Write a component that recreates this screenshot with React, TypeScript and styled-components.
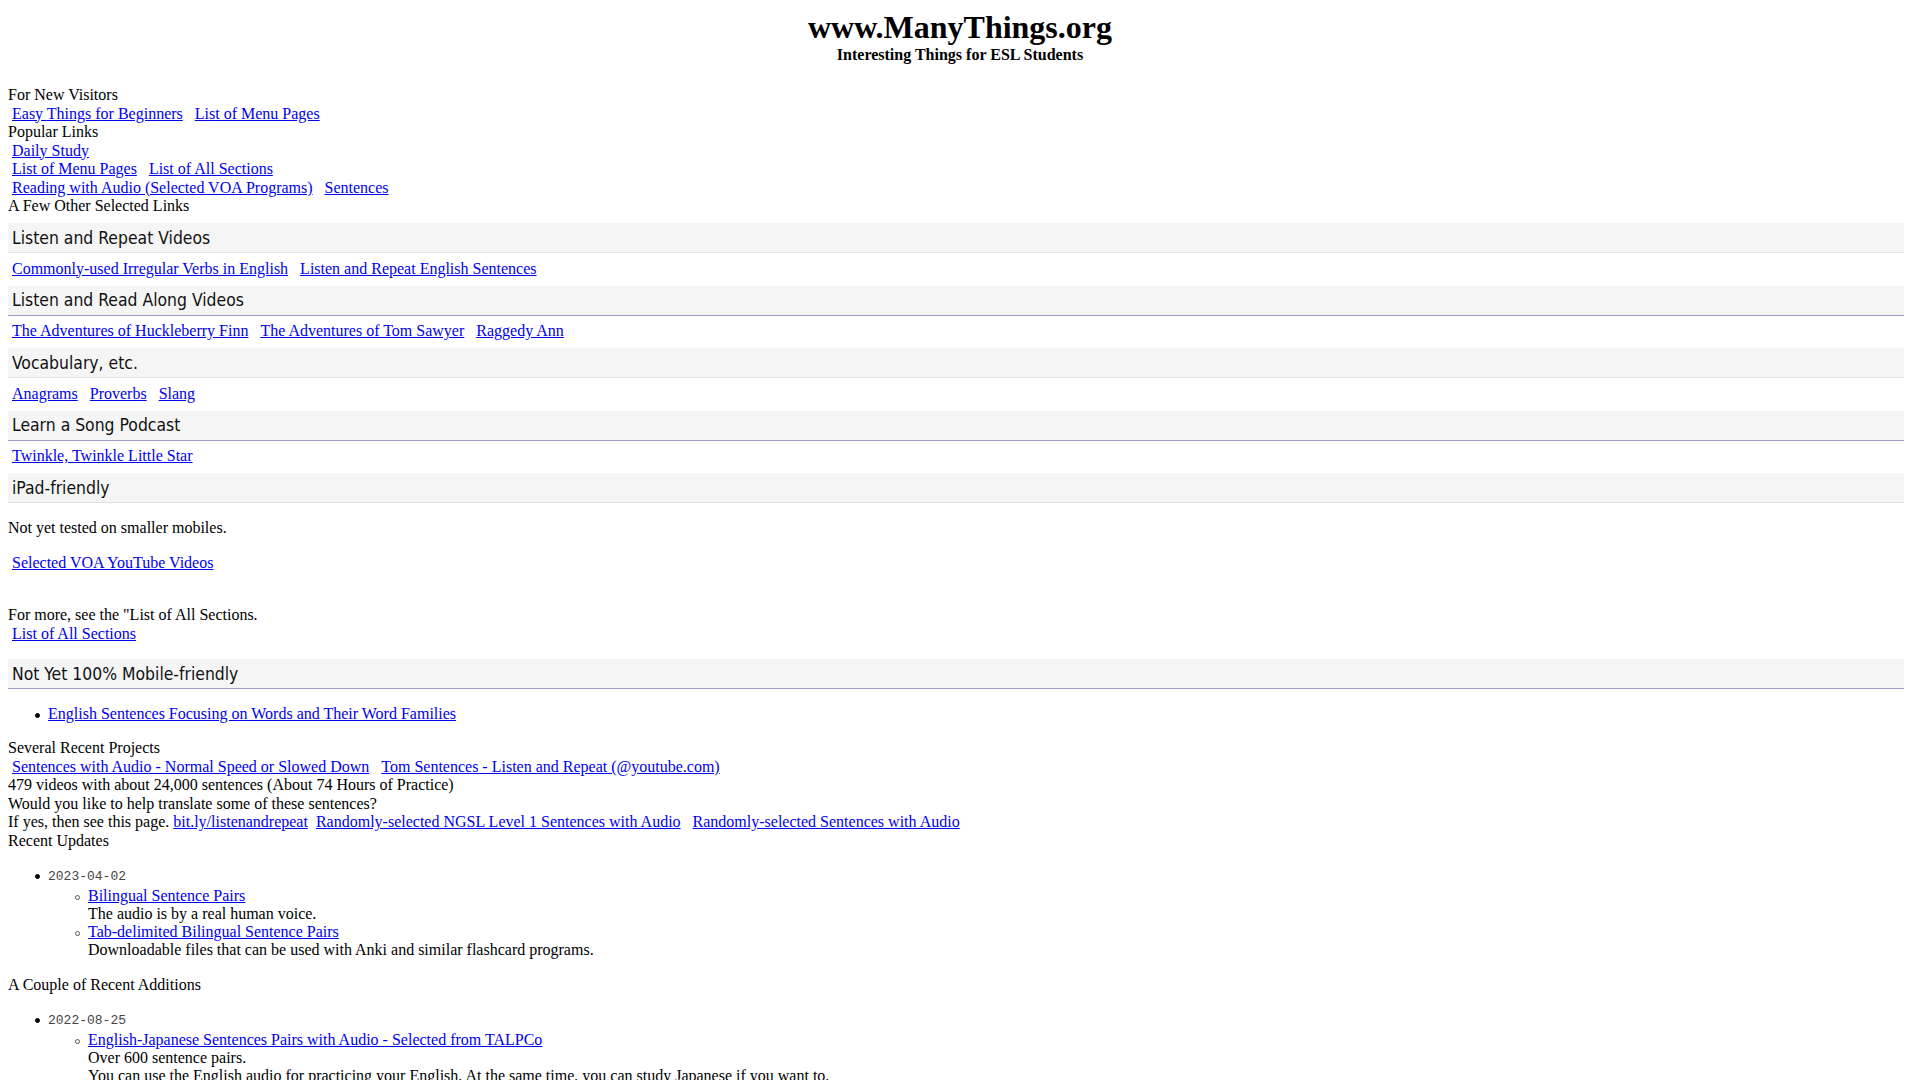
import React from "react";
import styled, { createGlobalStyle } from "styled-components";

const GlobalStyle = createGlobalStyle`
  html, body { background: #ffffff; }
  body {
    margin: 8px;
    font-family: "Liberation Serif", "Times New Roman", serif;
    font-size: 16px;
    line-height: 18.5px;
    color: #000000;
  }
`;

const Page = styled.div`
  display: block;
`;

const Masthead = styled.header`
  text-align: center;
  margin-bottom: 21.5px;
`;

const SiteTitle = styled.h1`
  margin: 0;
  font-size: 32px;
  font-weight: bold;
  line-height: 38px;
`;

const Tagline = styled.p`
  margin: 0;
  font-size: 16px;
  font-weight: bold;
`;

const Label = styled.div`
  display: block;
`;

const LinkRow = styled.div<{ $section?: boolean }>`
  display: flex;
  flex-wrap: wrap;
  column-gap: 12px;
  padding: ${(p) => (p.$section ? "6.5px 0 7.5px 4px" : "0 0 0 4px")};
`;

const Link = styled.a`
  color: #0000ee;
  text-decoration: underline;
  cursor: pointer;
`;

const Sections = styled.div`
  margin-top: 7.5px;
`;

const SectionHeader = styled.h2<{ $accent?: boolean }>`
  margin: 0 8px 0 0;
  padding: 4.5px 4px;
  background: #f5f5f5;
  font-family: "DejaVu Sans Condensed", "DejaVu Sans", Verdana, sans-serif;
  font-stretch: condensed;
  font-size: 17.4px;
  font-weight: normal;
  line-height: 20px;
  color: #111111;
  border-bottom: 1px solid ${(p) => (p.$accent ? "#9c9ccc" : "#e2e2ec")};
`;

const Para = styled.p<{ $top?: number; $indent?: boolean }>`
  margin: ${(p) => (p.$top ?? 16)}px 0 16px;
  padding-left: ${(p) => (p.$indent ? "4px" : "0")};
`;

const BulletList = styled.ul<{ $nested?: boolean }>`
  margin: ${(p) => (p.$nested ? "0" : "16px 0")};
  padding-left: 40px;
  list-style: none;
`;

const Item = styled.li<{ $circle?: boolean }>`
  position: relative;
  line-height: 18.3px;

  &::before {
    content: "";
    position: absolute;
    left: -13px;
    top: 8px;
    width: 5px;
    height: 5px;
    box-sizing: border-box;
    border-radius: 50%;
    background: ${(p) => (p.$circle ? "transparent" : "#000000")};
    border: 1px solid ${(p) => (p.$circle ? "#555555" : "#000000")};
  }
`;

const DateStamp = styled.span`
  font-family: "Liberation Mono", "Courier New", monospace;
  font-size: 13px;
  color: #444444;
`;

const Plain = styled.div`
  display: block;
`;

type Section = { title: string; links: string[] };

const linkSections: Section[] = [
  {
    title: "Listen and Repeat Videos",
    links: ["Commonly-used Irregular Verbs in English", "Listen and Repeat English Sentences"],
  },
  {
    title: "Listen and Read Along Videos",
    links: ["The Adventures of Huckleberry Finn", "The Adventures of Tom Sawyer", "Raggedy Ann"],
  },
  { title: "Vocabulary, etc.", links: ["Anagrams", "Proverbs", "Slang"] },
  { title: "Learn a Song Podcast", links: ["Twinkle, Twinkle Little Star"] },
];

type Update = { date: string; entries: { link: string; notes: string[] }[] };

const recentUpdates: Update[] = [
  {
    date: "2023-04-02",
    entries: [
      { link: "Bilingual Sentence Pairs", notes: ["The audio is by a real human voice."] },
      {
        link: "Tab-delimited Bilingual Sentence Pairs",
        notes: ["Downloadable files that can be used with Anki and similar flashcard programs."],
      },
    ],
  },
];

const recentAdditions: Update[] = [
  {
    date: "2022-08-25",
    entries: [
      {
        link: "English-Japanese Sentences Pairs with Audio - Selected from TALPCo",
        notes: [
          "Over 600 sentence pairs.",
          "You can use the English audio for practicing your English. At the same time, you can study Japanese if you want to.",
        ],
      },
    ],
  },
];

function UpdateList({ items }: { items: Update[] }) {
  return (
    <BulletList>
      {items.map((u) => (
        <Item key={u.date}>
          <DateStamp>{u.date}</DateStamp>
          <BulletList $nested>
            {u.entries.map((e) => (
              <Item key={e.link} $circle>
                <Link href="#">{e.link}</Link>
                {e.notes.map((n) => (
                  <Plain key={n}>{n}</Plain>
                ))}
              </Item>
            ))}
          </BulletList>
        </Item>
      ))}
    </BulletList>
  );
}

export default function App() {
  return (
    <Page>
      <GlobalStyle />
      <Masthead>
        <SiteTitle>www.ManyThings.org</SiteTitle>
        <Tagline>Interesting Things for ESL Students</Tagline>
      </Masthead>

      <Label>For New Visitors</Label>
      <LinkRow>
        <Link href="#">Easy Things for Beginners</Link>
        <Link href="#">List of Menu Pages</Link>
      </LinkRow>
      <Label>Popular Links</Label>
      <LinkRow>
        <Link href="#">Daily Study</Link>
      </LinkRow>
      <LinkRow>
        <Link href="#">List of Menu Pages</Link>
        <Link href="#">List of All Sections</Link>
      </LinkRow>
      <LinkRow>
        <Link href="#">Reading with Audio (Selected VOA Programs)</Link>
        <Link href="#">Sentences</Link>
      </LinkRow>
      <Label>A Few Other Selected Links</Label>

      <Sections>
        {linkSections.map((s, i) => (
          <React.Fragment key={s.title}>
            <SectionHeader $accent={i % 2 === 1}>{s.title}</SectionHeader>
            <LinkRow $section>
              {s.links.map((l) => (
                <Link key={l} href="#">
                  {l}
                </Link>
              ))}
            </LinkRow>
          </React.Fragment>
        ))}
        <SectionHeader>iPad-friendly</SectionHeader>
      </Sections>

      <Para>Not yet tested on smaller mobiles.</Para>
      <Para $indent>
        <Link href="#">Selected VOA YouTube Videos</Link>
      </Para>
      <Para $top={34}>
        For more, see the "List of All Sections.
        <LinkRow>
          <Link href="#">List of All Sections</Link>
        </LinkRow>
      </Para>

      <SectionHeader $accent>Not Yet 100% Mobile-friendly</SectionHeader>
      <BulletList>
        <Item>
          <Link href="#">English Sentences Focusing on Words and Their Word Families</Link>
        </Item>
      </BulletList>

      <Label>Several Recent Projects</Label>
      <LinkRow>
        <Link href="#">Sentences with Audio - Normal Speed or Slowed Down</Link>
        <Link href="#">Tom Sentences - Listen and Repeat (@youtube.com)</Link>
      </LinkRow>
      <Label>479 videos with about 24,000 sentences (About 74 Hours of Practice)</Label>
      <Label>Would you like to help translate some of these sentences?</Label>
      <Label>
        If yes, then see this page. <Link href="#">bit.ly/listenandrepeat</Link>
        {"\u00a0 "}
        <Link href="#">Randomly-selected NGSL Level 1 Sentences with Audio</Link>
        {"\u00a0\u00a0 "}
        <Link href="#">Randomly-selected Sentences with Audio</Link>
      </Label>
      <Label>Recent Updates</Label>
      <UpdateList items={recentUpdates} />

      <Label>A Couple of Recent Additions</Label>
      <UpdateList items={recentAdditions} />
    </Page>
  );
}
